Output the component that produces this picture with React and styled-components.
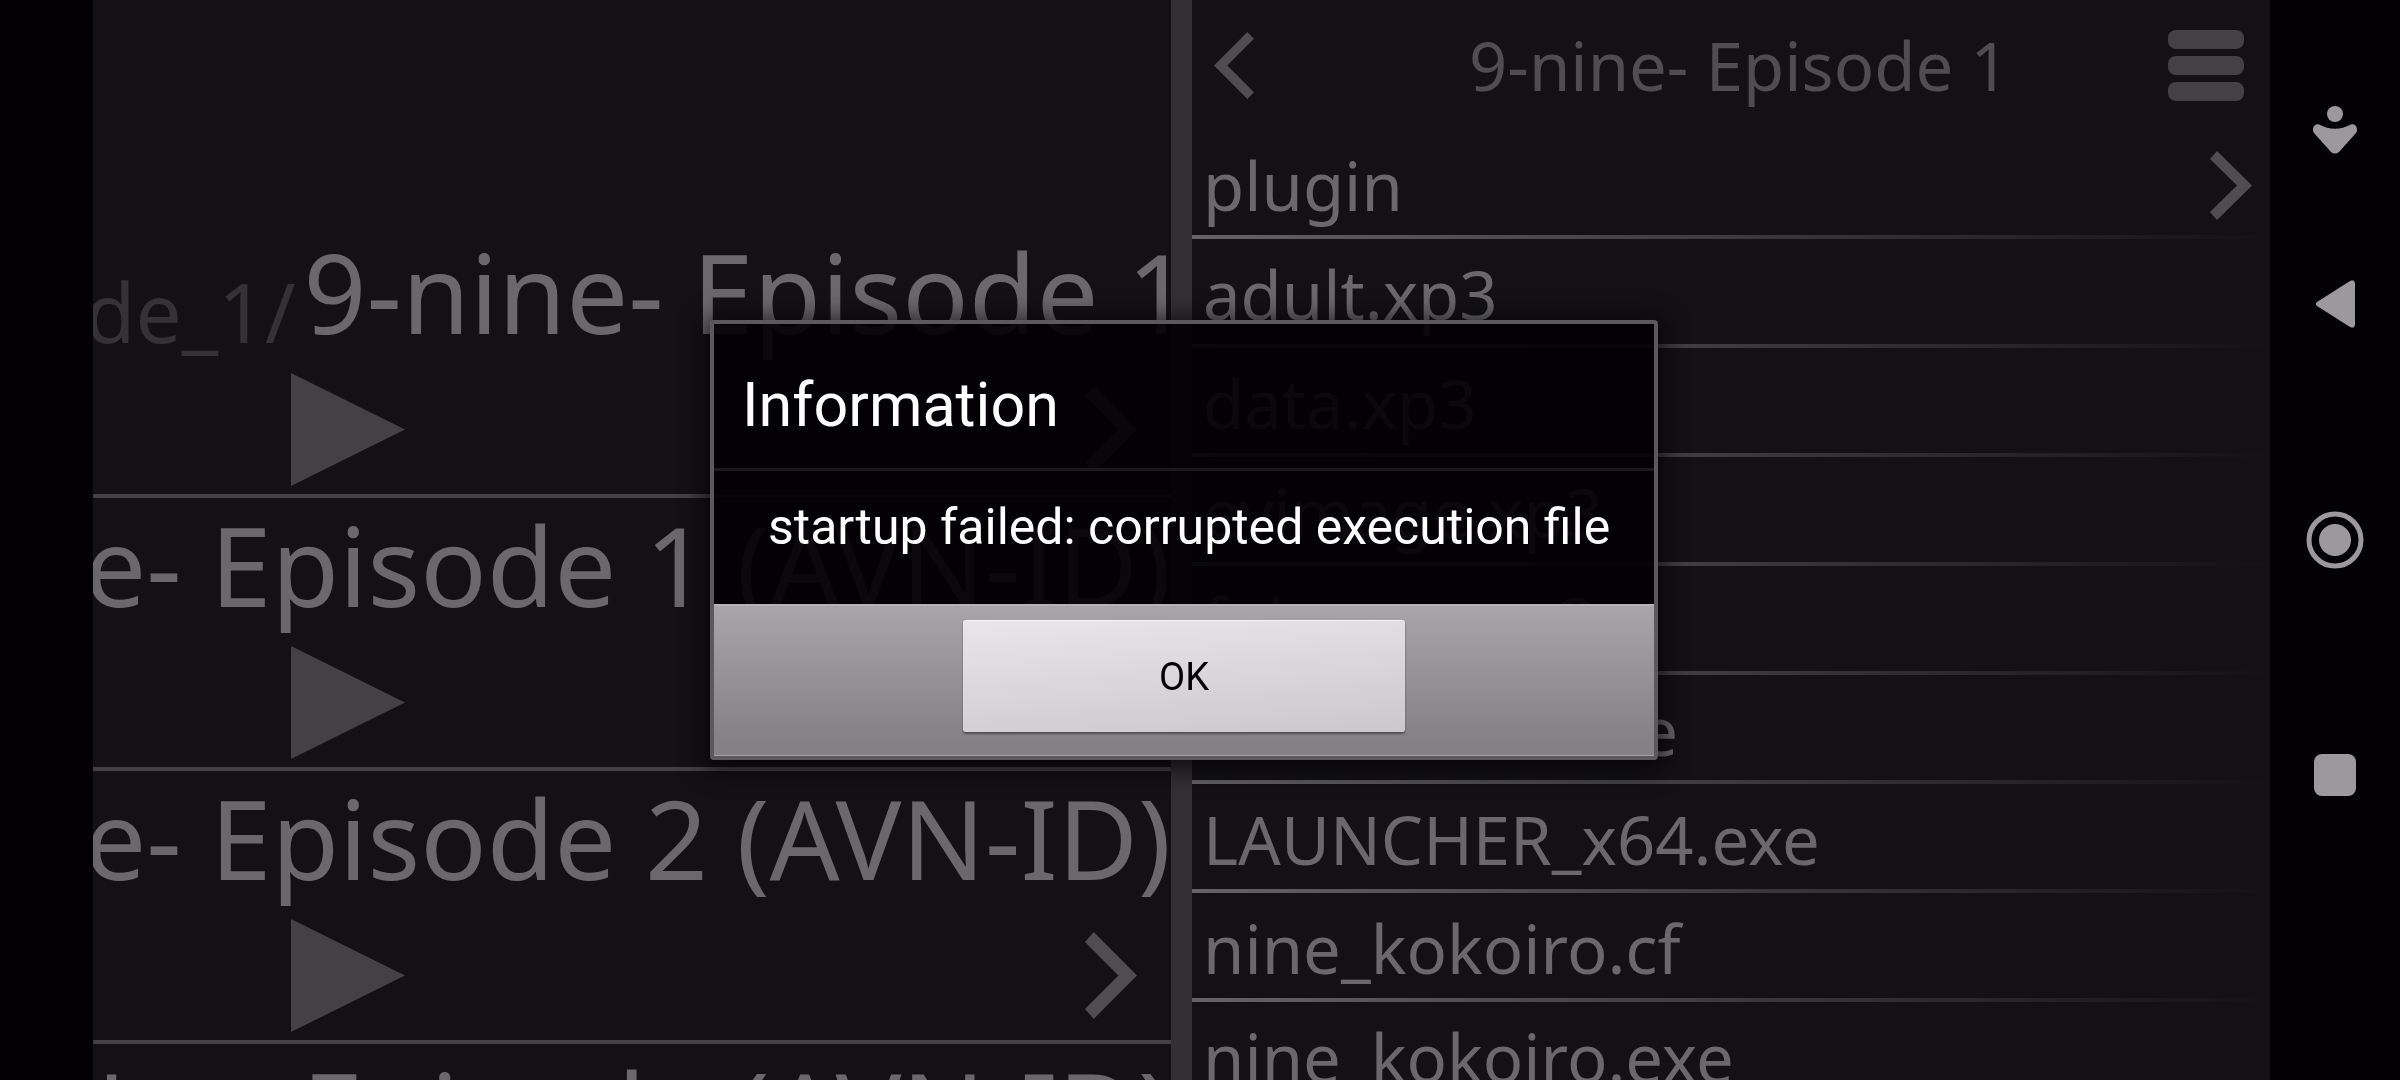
import styled, { createGlobalStyle } from 'styled-components'

const GlobalStyle = createGlobalStyle`
  * {
    box-sizing: border-box;
  }

  body {
    margin: 0;
    background: #020002;
    overflow: hidden;
  }

  button {
    border: 0;
    padding: 0;
    background: none;
    color: inherit;
    font: inherit;
    cursor: pointer;
  }

  svg {
    display: block;
  }
`

const Screen = styled.div`
  display: grid;
  grid-template-columns: 93px 1fr 21px 1fr 130px;
  height: 100vh;
  font-family: 'Noto Sans', 'Open Sans', sans-serif;
  color: #6a686b;
`

const Panel = styled.section`
  min-width: 0;
  overflow: hidden;
  background: #131114;
`

const GamePanel = styled(Panel)`
  grid-column: 2;
  padding-top: 225px;
`

const Splitter = styled.div`
  background: #323033;
`

const GameRow = styled.article`
  height: 273px;
  border-bottom: 4px solid #434144;
`

const GameTitle = styled.h2`
  display: flex;
  justify-content: flex-end;
  align-items: flex-end;
  gap: 8px;
  margin: 0 ${(p) => -(p.$scroll || 0)}px 0 0;
  font-size: 110px;
  font-weight: 400;
  line-height: 132px;
  white-space: nowrap;
`

const ParentPath = styled.span`
  color: #343235;
  font-size: 82px;
  line-height: 92px;
`

const GameActions = styled.div`
  display: flex;
  justify-content: space-between;
  align-items: center;
  padding: 16px 34px 0 198px;
`

const Header = styled.header`
  display: grid;
  grid-template-columns: 1fr auto 1fr;
  align-items: center;
  height: 130px;
  padding: 0 26px 0 22px;
  color: #4f4d50;
`

const HeaderTitle = styled.h1`
  margin: 0;
  padding-left: 20px;
  font-size: 67px;
  font-weight: 400;
  line-height: 96px;
`

const BackButton = styled.button`
  justify-self: start;
`

const MenuButton = styled.button`
  display: grid;
  justify-self: end;
  gap: 7px;
  width: 76px;

  span {
    height: 19px;
    border-radius: 8px;
    background: #434144;
  }
`

const FileList = styled.ul`
  margin: 0;
  padding: 0;
  list-style: none;
`

const FileItem = styled.li`
  border-bottom: 4px solid;
  border-image: linear-gradient(to right, #656366, #131114) 1;
`

const FileButton = styled.button`
  display: flex;
  justify-content: space-between;
  align-items: center;
  width: 100%;
  height: 105px;
  padding: 5px 18px 0 11px;
  font-size: 67px;
  line-height: 96px;
  text-align: left;
`

const NavBar = styled.nav`
  color: #9b999c;
`

const NavButtons = styled.div`
  display: grid;
  grid-template-rows: 174px 174px 298px 172px;
  justify-items: center;
  align-items: center;
  padding-top: 43px;
`

const Overlay = styled.div`
  position: fixed;
  inset: 0 32px 0 0;
  display: flex;
  justify-content: center;
  align-items: center;
  pointer-events: none;
`

const Dialog = styled.div`
  width: 948px;
  border: 4px solid #5b595c;
  border-radius: 4px;
  background: rgba(2, 0, 2, 0.92);
  box-shadow: 0 4px 24px 6px rgba(0, 0, 0, 0.7);
  color: #fff;
  font-family: Roboto, sans-serif;
  pointer-events: auto;
`

const DialogTitle = styled.h2`
  margin: 0;
  padding: 43px 28px 25px;
  border-bottom: 3px solid #1a181b;
  font-size: 61px;
  font-weight: 400;
  line-height: 76px;
`

const DialogMessage = styled.p`
  margin: 0;
  padding: 26px 28px 47px 54px;
  font-size: 50px;
  line-height: 60px;
`

const DialogFooter = styled.footer`
  display: flex;
  justify-content: center;
  padding: 14px 0 23px;
  border-top: 2px solid #b5b3b6;
  border-bottom: 1px solid #a19fa2;
  background: linear-gradient(#a7a5a8, #838184 90%);
`

const OkButton = styled.button`
  width: 442px;
  height: 112px;
  border-top: 1px solid #f6f4f7;
  border-radius: 3px;
  background: linear-gradient(175deg, #e8e6e9, #cac8cb);
  box-shadow: 0 2px 2px #535154;
  color: #000;
  font-size: 38px;
`

const Chevron = ({ width, height, back }) => (
  <svg width={width} height={height} viewBox="0 0 42 69" preserveAspectRatio="none" fill="#4f4d50">
    <path d={back ? 'M35 0 42 7 14 34.500 42 62 35 69 0 34.500Z' : 'M7 0 42 34.500 7 69 0 61 27 34.500 0 8Z'} />
  </svg>
)

const games = [
  { id: 1, parent: '9-nine-Episode_1/', name: '9-nine- Episode 1', scroll: 19 },
  { id: 2, name: '9-nine- Episode 1 (AVN-ID)' },
  { id: 3, name: '9-nine- Episode 2 (AVN-ID)' },
  { id: 4, name: '9-nine- New Episode (AVN-ID)' },
]

const files = [
  { name: 'plugin', folder: true },
  { name: 'adult.xp3' },
  { name: 'data.xp3' },
  { name: 'evimage.xp3' },
  { name: 'fgimage.xp3' },
  { name: 'LAUNCHER.exe' },
  { name: 'LAUNCHER_x64.exe' },
  { name: 'nine_kokoiro.cf' },
  { name: 'nine_kokoiro.exe' },
]

const App = () => {
  return (
    <>
      <GlobalStyle />
      <Screen>
        <GamePanel>
          {games.map((game) => (
            <GameRow key={game.id}>
              <GameTitle $scroll={game.scroll}>
                {game.parent && <ParentPath>{game.parent}</ParentPath>}
                <span>{game.name}</span>
              </GameTitle>
              <GameActions>
                <button aria-label="Play">
                  <svg width="114" height="113" viewBox="0 0 114 113" fill="#434144">
                    <path d="M0 0 114 56.500 0 113Z" />
                  </svg>
                </button>
                <button aria-label="Open">
                  <Chevron width={52} height={87} />
                </button>
              </GameActions>
            </GameRow>
          ))}
        </GamePanel>
        <Splitter />
        <Panel>
          <Header>
            <BackButton aria-label="Back">
              <Chevron width={40} height={67} back />
            </BackButton>
            <HeaderTitle>9-nine- Episode 1</HeaderTitle>
            <MenuButton aria-label="Menu">
              <span />
              <span />
              <span />
            </MenuButton>
          </Header>
          <FileList>
            {files.map((file) => (
              <FileItem key={file.name}>
                <FileButton>
                  {file.name}
                  {file.folder && <Chevron width={42} height={69} />}
                </FileButton>
              </FileItem>
            ))}
          </FileList>
        </Panel>
        <NavBar>
          <NavButtons>
            <button aria-label="Accessibility">
              <svg width="44" height="48" viewBox="0 0 44 48" fill="currentColor">
                <circle cx="22" cy="8" r="8" />
                <path d="M6 18.500Q22 27 38 18.500C42 17 46 22 43 27L26 46Q22 49 18 46L1 27C-2 22 2 17 6 18.500Z" />
              </svg>
            </button>
            <button aria-label="Back">
              <svg width="39" height="48" viewBox="0 0 39 48" fill="currentColor">
                <path d="M1 22 34 1Q38-1 39 3V45Q38 49 34 47L1 26Q-1 24 1 22Z" />
              </svg>
            </button>
            <button aria-label="Home">
              <svg width="58" height="58" viewBox="0 0 58 58" fill="currentColor">
                <circle cx="29" cy="29" r="26" fill="none" stroke="currentColor" strokeWidth="5" />
                <circle cx="29" cy="29" r="16" />
              </svg>
            </button>
            <button aria-label="Recent apps">
              <svg width="42" height="42" viewBox="0 0 42 42" fill="currentColor">
                <rect width="42" height="42" rx="8" />
              </svg>
            </button>
          </NavButtons>
        </NavBar>
      </Screen>
      <Overlay>
        <Dialog role="alertdialog" aria-labelledby="dialog-title" aria-describedby="dialog-message">
          <DialogTitle id="dialog-title">Information</DialogTitle>
          <DialogMessage id="dialog-message">startup failed: corrupted execution file</DialogMessage>
          <DialogFooter>
            <OkButton>OK</OkButton>
          </DialogFooter>
        </Dialog>
      </Overlay>
    </>
  )
}

export default App
